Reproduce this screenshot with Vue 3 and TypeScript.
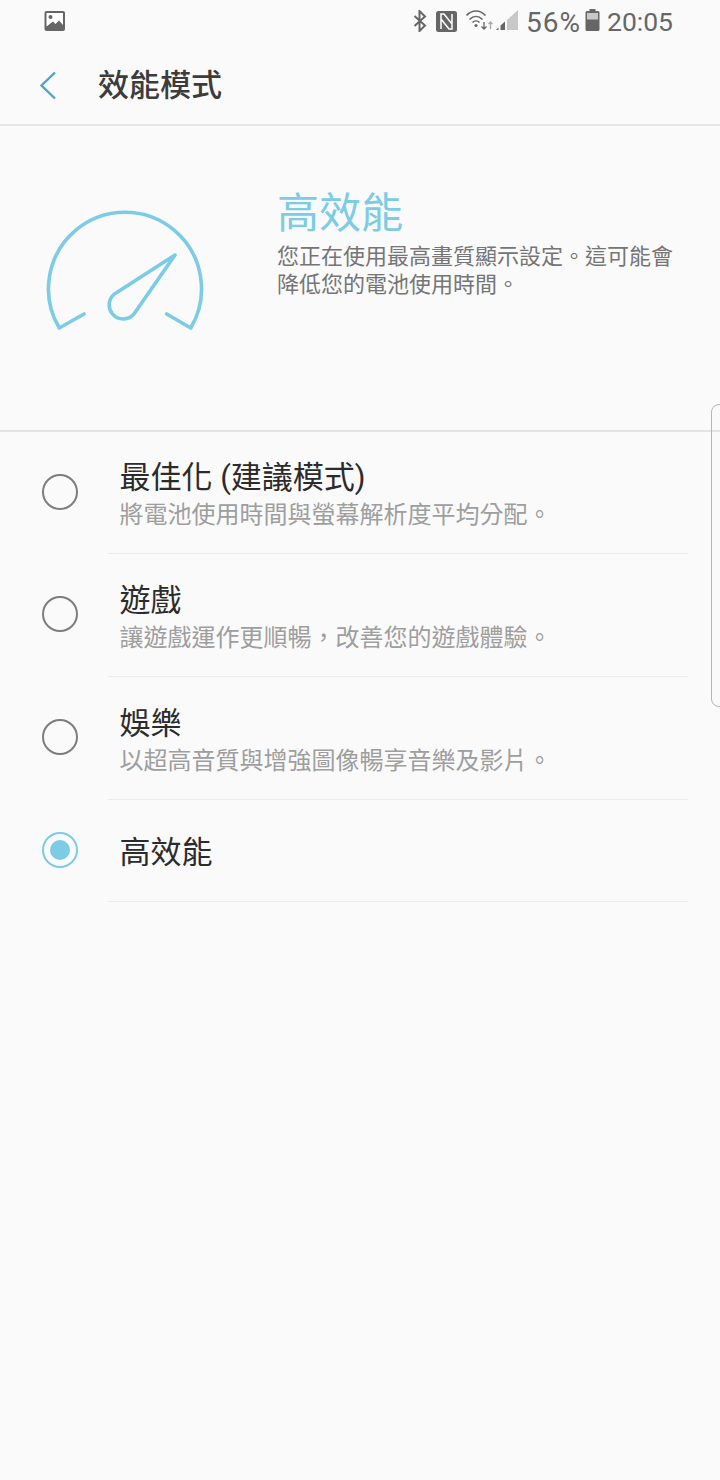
<template>
  <div class="screen">
    <div class="status-bar">
      <svg class="pic-icon" width="22" height="22" viewBox="0 0 22 22">
        <rect x="0.5" y="1" width="20.5" height="20" rx="2" fill="#666" />
        <path d="M2.5 3h16.500v12l-4-4.500-3.500 3.500-2.500-2.500-6.500 5z" fill="#fff" />
        <circle cx="6.500" cy="7" r="2" fill="#666" />
      </svg>
      <div class="status-right">
        <svg width="14" height="22" viewBox="0 0 14 22" fill="none" stroke="#666" stroke-width="2">
          <path d="M1.500 6l10.500 9.500-5.500 5.500V1L12 6.500 1.500 16" />
        </svg>
        <svg class="nfc" width="21" height="22" viewBox="0 0 21 22">
          <rect x="0" y="1" width="21" height="21" rx="2.500" fill="#666" />
          <path d="M5 19V4h3l8 10M16 4v15h-3L5 9" fill="none" stroke="#fff" stroke-width="1.500" />
        </svg>
        <svg class="wifi" width="30" height="24" viewBox="0 0 30 24" fill="none" stroke="#666" stroke-width="1.600">
          <path d="M0.500 6.500c5.500-6 13.500-6 19 0" />
          <path d="M3.500 10.500c4-4 9-4 13 0" />
          <path d="M6.500 13.500c2-2 5-2 7 0" />
          <circle cx="10" cy="16.500" r="1.600" fill="#666" stroke="none" />
          <path d="M18 13v7M15.500 17.500l2.500 2.500 2.500-2.500" stroke-width="1.300" />
          <path d="M24.500 20v-7M22.500 15l2 -2 2 2" stroke="#aaa" stroke-width="1.300" />
        </svg>
        <svg class="signal" width="22" height="22" viewBox="0 0 22 22">
          <path d="M22 0v20H11V10z" fill="#c8c8c8" />
          <path d="M0 20l2.500-2.500V20zM4.500 20v-4.500l4.500-4V20z" fill="#666" />
        </svg>
        <span class="pct">56%</span>
        <svg class="battery" width="15" height="22" viewBox="0 0 15 22">
          <path d="M4.500 0h6v2h2.500a1.500 1.500 0 0 1 1.500 1.500V20.500a1.500 1.500 0 0 1-1.500 1.500H2a1.500 1.500 0 0 1-1.500-1.500V3.500A1.500 1.500 0 0 1 2 2h2.500z" fill="#666" />
          <rect x="2" y="4" width="11" height="6.500" fill="#c8c8c8" />
        </svg>
        <span class="time">20:05</span>
      </div>
    </div>

    <header class="app-bar">
      <svg class="back" width="18" height="30" viewBox="0 0 18 30" fill="none" stroke="#4aa5c8" stroke-width="2.400">
        <path d="M17 2.500L3.500 15.500 17 28.500" />
      </svg>
      <h1>效能模式</h1>
    </header>

    <section class="hero">
      <svg class="gauge" width="156" height="120" viewBox="0 0 156 120" fill="none" stroke="#7bcce4" stroke-width="3.600" stroke-linecap="round" stroke-linejoin="round">
        <path d="M37 102L12.300 116A76.500 76.500 0 1 1 143.700 116L119.700 102" />
        <path d="M128 43L69.800 80.500A14 14 0 1 0 88 100.500z" />
      </svg>
      <div class="hero-text">
        <div class="hero-title">高效能</div>
        <p>您正在使用最高畫質顯示設定。這可能會降低您的電池使用時間。</p>
      </div>
    </section>

    <ul class="mode-list">
      <li v-for="mode in modes" :key="mode.title" class="mode" :class="{ 'mode-plain': !mode.desc }">
        <span class="radio" :class="{ on: mode.selected }"></span>
        <div class="mode-body">
          <div class="mode-title">{{ mode.title }}</div>
          <div v-if="mode.desc" class="mode-desc">{{ mode.desc }}</div>
        </div>
      </li>
    </ul>

    <div class="edge-handle"></div>
  </div>
</template>

<script setup lang="ts">
const modes = [
  { title: '最佳化 (建議模式)', desc: '將電池使用時間與螢幕解析度平均分配。', selected: false },
  { title: '遊戲', desc: '讓遊戲運作更順暢，改善您的遊戲體驗。', selected: false },
  { title: '娛樂', desc: '以超高音質與增強圖像暢享音樂及影片。', selected: false },
  { title: '高效能', desc: '', selected: true },
]
</script>

<style>
html,
body {
  margin: 0;
  background: #fafafa;
}
</style>

<style scoped>
.screen {
  position: relative;
  width: 720px;
  height: 1480px;
  overflow: hidden;
  background: #fafafa;
  font-family: Roboto, "Noto Sans CJK TC", sans-serif;
  color: #2b2b2b;
}

.status-bar {
  height: 44px;
  display: flex;
  align-items: center;
  justify-content: space-between;
  padding: 0 47px 2px 44px;
  box-sizing: border-box;
}

.status-right {
  display: flex;
  align-items: center;
  color: #666;
  font-size: 26.500px;
}

.nfc {
  margin-left: 9px;
}

.wifi {
  margin-left: 9px;
}

.pct {
  margin: 2px 0 0 8px;
  font-size: 28px;
  letter-spacing: 1px;
}

.battery {
  margin: -2px 0 0 4px;
}

.time {
  margin: 1px 0 0 7px;
}

.app-bar {
  height: 80px;
  display: flex;
  align-items: center;
  border-bottom: 2px solid #e6e6e6;
  padding: 0 0 0 38px;
}

.back {
  margin-top: 2px;
}

.app-bar h1 {
  margin: 3px 0 0 42px;
  font-size: 31px;
  font-weight: 500;
  color: #3c3c3c;
  line-height: 40px;
}

.hero {
  height: 306px;
  display: flex;
  border-bottom: 2px solid #e3e3e3;
  box-sizing: border-box;
  padding: 86px 0 0 47px;
}

.gauge {
  flex: none;
  overflow: visible;
}

.hero-text {
  margin-left: 74px;
  width: 396px;
  margin-top: -26px;
}

.hero-title {
  font-size: 42px;
  line-height: 56px;
  color: #7bcce4;
}

.hero-text p {
  margin: 1px 0 0;
  font-size: 22px;
  line-height: 28px;
  color: #757575;
}

.mode-list {
  list-style: none;
  margin: 0;
  padding: 0;
}

.mode {
  display: flex;
  height: 123px;
  padding-left: 42px;
  box-sizing: border-box;
}

.mode:first-child {
  height: 122px;
}

.mode-plain {
  height: 102px;
}

.radio {
  flex: none;
  width: 36px;
  height: 36px;
  margin-top: 42px;
  border: 2.5px solid #7d7d7d;
  border-radius: 50%;
  box-sizing: border-box;
  position: relative;
}

.mode-plain .radio {
  margin-top: 32px;
}

.radio.on {
  border-color: #7bcce4;
}

.radio.on::after {
  content: "";
  position: absolute;
  left: 5.500px;
  top: 5.500px;
  width: 20px;
  height: 20px;
  border-radius: 50%;
  background: #7bcce4;
}

.mode-body {
  flex: 1;
  margin: 0 32px 0 30px;
  padding: 24px 0 0 11.500px;
  border-bottom: 1.500px solid #ececec;
  box-sizing: border-box;
}

.mode:not(:first-child) .mode-body {
  padding-top: 25px;
}

.mode-plain:not(:first-child) .mode-body {
  padding-top: 31px;
}

.mode-title {
  font-size: 31px;
  line-height: 44px;
}

.mode-desc {
  margin-top: -2px;
  font-size: 24px;
  line-height: 34px;
  color: #9e9e9e;
}

.edge-handle {
  position: absolute;
  left: 711px;
  top: 404px;
  width: 16px;
  height: 303px;
  border: 1.500px solid #b5b5b5;
  border-radius: 8px;
  box-sizing: border-box;
}
</style>
